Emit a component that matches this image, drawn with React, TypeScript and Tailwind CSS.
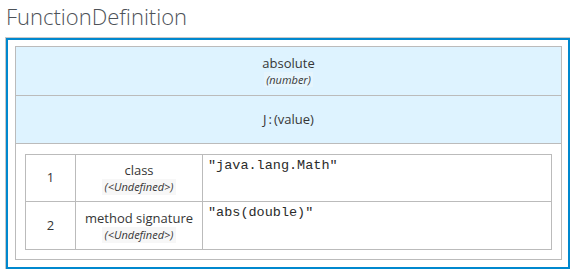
const rows = [
  { n: '1', name: 'class', value: '"java.lang.Math"' },
  { n: '2', name: 'method signature', value: '"abs(double)"' },
]

export default function App() {
  return (
    <div className="w-[575px] h-[275px] bg-white font-['Open_Sans',sans-serif] text-[#363636]">
      <h1 className="pl-[6px] pt-[1px] h-[36px] text-[22px] font-light leading-[30px] text-[#4d5258]">
        FunctionDefinition
      </h1>
      <div className="ml-[5px] mt-[1px] w-[565px] border-l border-t border-[#c8c8c8]">
        <div className="border-2 border-[#0088ce] pl-[7px] pr-[6px] pt-[6px] pb-[7px]">
          <div className="border border-[#bbbbbb]">
            {/* cabecera de la función */}
            <div className="h-[49px] bg-[#def3ff] border-b border-[#bbbbbb] flex flex-col items-center justify-center">
              <div className="text-[13px] leading-[17px]">absolute</div>
              <div className="text-[11px] italic leading-[15px] px-[2px] bg-[#e6f5fd]">(number)</div>
            </div>
            <div className="h-[48px] bg-[#def3ff] border-b border-[#bbbbbb] flex items-center justify-center">
              <span className="text-[13px]">
                J<span className="mx-[2px]">:</span>(value)
              </span>
            </div>
            <div className="pt-[10px] pb-[9px] px-[9px]">
              <div className="border border-[#bbbbbb]">
                {rows.map((r, i) => (
                  <div
                    key={r.n}
                    className={`flex h-[47px] ${i === 0 ? 'border-b border-[#bbbbbb]' : ''}`}
                  >
                    <div className="w-[50px] border-r border-[#bbbbbb] flex items-center justify-center text-[13px]">
                      {r.n}
                    </div>
                    <div className="w-[127px] border-r border-[#bbbbbb] flex flex-col items-center justify-center">
                      <div className="text-[13px] leading-[18px]">{r.name}</div>
                      <div className="text-[11px] italic leading-[16px] px-[3px] bg-[#f7f7f7]">
                        (&lt;Undefined&gt;)
                      </div>
                    </div>
                    <div className="flex-1 pl-[5px] pt-[2px] font-['Liberation_Mono',monospace] text-[13.5px] leading-[18px] whitespace-pre text-[#2b2b2b]">
                      {r.value}
                    </div>
                  </div>
                ))}
              </div>
            </div>
          </div>
        </div>
      </div>
    </div>
  )
}
